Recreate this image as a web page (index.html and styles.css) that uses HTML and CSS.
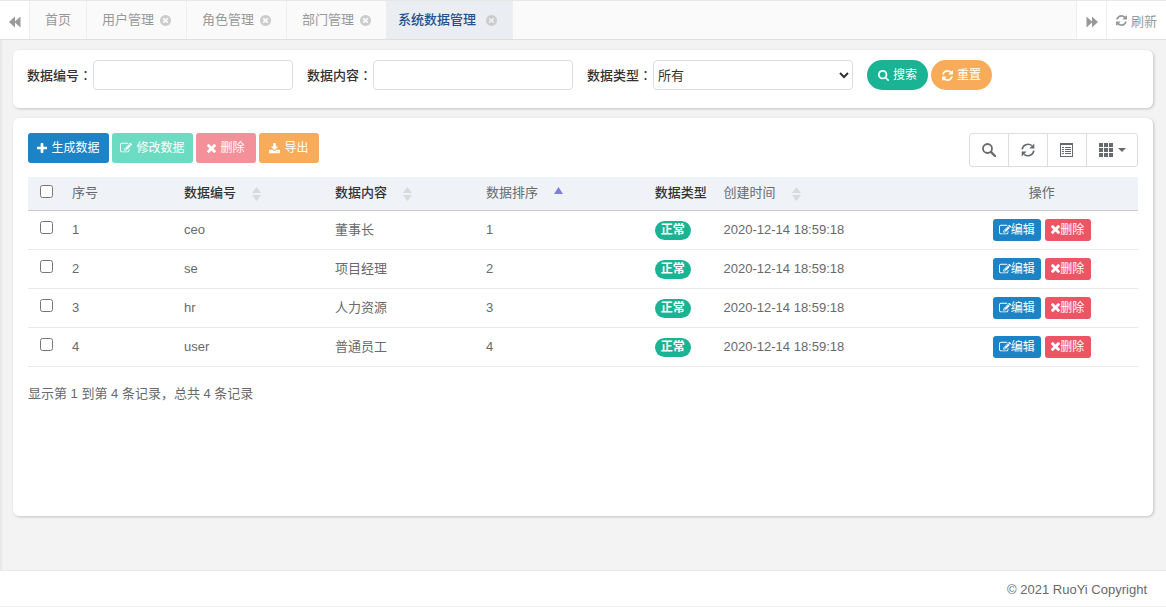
FILE: index.html
```html
<!DOCTYPE html>
<html lang="zh-CN">
<head>
<meta charset="utf-8">
<title>系统数据管理</title>
<link rel="stylesheet" href="styles.css">
</head>
<body>
<svg class="sprite" aria-hidden="true">
  <symbol id="close" viewBox="128 128 1536 1536"><path d="M1277 1122q0-26-19-45l-181-181 181-181q19-19 19-45 0-27-19-46l-90-90q-19-19-46-19-26 0-45 19l-181 181-181-181q-19-19-45-19-27 0-46 19l-90 90q-19 19-19 46 0 26 19 45l181 181-181 181q-19 19-19 45 0 27 19 46l90 90q19 19 46 19 26 0 45-19l181-181 181 181q19 19 45 19 27 0 46-19l90-90q19-19 19-46zm387-226q0 209-103 385.5t-279.5 279.5-385.5 103-385.5-103-279.5-279.5-103-385.5 103-385.5 279.5-279.5 385.5-103 385.5 103 279.5 279.5 103 385.5z"/></symbol>
  <symbol id="refresh" viewBox="128 128 1536 1536"><path d="M1639 1056q0 5-1 7-64 268-268 434.5t-478 166.5q-146 0-282.5-55t-243.5-157l-129 129q-19 19-45 19t-45-19-19-45v-448q0-26 19-45t45-19h448q26 0 45 19t19 45-19 45l-137 137q71 66 161 102t187 36q134 0 250-65t186-179q11-17 53-117 8-23 30-23h192q13 0 22.5 9.5t9.5 22.5zm25-800v448q0 26-19 45t-45 19h-448q-26 0-45-19t-19-45 19-45l138-138q-148-137-349-137-134 0-250 65t-186 179q-11 17-53 117-8 23-30 23h-199q-13 0-22.5-9.5t-9.5-22.5v-7q65-268 270-434.5t480-166.5q146 0 284 55.5t245 156.5l130-129q19-19 45-19t45 19 19 45z"/></symbol>
  <symbol id="search" viewBox="64 128 1664 1664"><path d="M1216 832q0-185-131.5-316.5t-316.5-131.5-316.5 131.5-131.5 316.5 131.5 316.5 316.5 131.5 316.5-131.5 131.5-316.5zm512 832q0 52-38 90t-90 38q-54 0-90-38l-343-342q-179 124-399 124-143 0-273.5-55.5t-225-150-150-225-55.5-273.5 55.5-273.5 150-225 225-150 273.5-55.5 273.5 55.5 225 150 150 225 55.5 273.5q0 220-124 399l343 343q37 37 37 90z"/></symbol>
  <symbol id="edit" viewBox="0 0 1792 1792"><path d="M888 1184l116-116-152-152-116 116v56h96v96h56zm440-720q-16-16-33 1l-350 350q-17 17-1 33t33-1l350-350q17-17 1-33zm80 594v190q0 119-84.5 203.5t-203.5 84.5h-832q-119 0-203.5-84.5t-84.5-203.5v-832q0-119 84.5-203.5t203.5-84.5h832q63 0 117 25 15 7 18 23 3 17-9 29l-49 49q-14 14-32 8-23-6-45-6h-832q-66 0-113 47t-47 113v832q0 66 47 113t113 47h832q66 0 113-47t47-113v-126q0-13 9-22l64-64q15-15 35-7t20 29zm-96-738l288 288-672 672h-288v-288zm444 132l-92 92-288-288 92-92q28-28 68-28t68 28l152 152q28 28 28 68t-28 68z"/></symbol>
  <symbol id="times" viewBox="302 366 1188 1188"><path d="M1490 1322q0 40-28 68l-136 136q-28 28-68 28t-68-28l-294-294-294 294q-28 28-68 28t-68-28l-136-136q-28-28-28-68t28-68l294-294-294-294q-28-28-28-68t28-68l136-136q28-28 68-28t68 28l294 294 294-294q28-28 68-28t68 28l136 136q28 28 28 68t-28 68l-294 294 294 294q28 28 28 68z"/></symbol>
  <symbol id="plus" viewBox="192 128 1408 1408"><path d="M1600 736v192q0 40-28 68t-68 28h-416v416q0 40-28 68t-68 28h-192q-40 0-68-28t-28-68v-416h-416q-40 0-68-28t-28-68v-192q0-40 28-68t68-28h416v-416q0-40 28-68t68-28h192q40 0 68 28t28 68v416h416q40 0 68 28t28 68z"/></symbol>
  <symbol id="download" viewBox="64 0 1664 1664"><path d="M1344 1344q0-26-19-45t-45-19-45 19-19 45 19 45 45 19 45-19 19-45zm256 0q0-26-19-45t-45-19-45 19-19 45 19 45 45 19 45-19 19-45zm128-224v320q0 40-28 68t-68 28h-1472q-40 0-68-28t-28-68v-320q0-40 28-68t68-28h465l135 136q58 56 136 56t136-56l136-136h464q40 0 68 28t28 68zm-325-569q17 41-14 70l-448 448q-18 19-45 19t-45-19l-448-448q-31-29-14-70 17-39 59-39h256v-448q0-26 19-45t45-19h256q26 0 45 19t19 45v448h256q42 0 59 39z"/></symbol>
  <symbol id="rewind" viewBox="0 0 12 12"><path d="M6 .5v5L11.500 .5v11L6 6.500v5L0 6z"/></symbol>
  <symbol id="forward" viewBox="0 0 12 12"><path d="M6 .5v5L.5 .5v11L6 6.500v5L12 6z"/></symbol>
  <symbol id="glass" viewBox="0 0 14 14"><circle cx="5.500" cy="5.500" r="4.500" fill="none" stroke="currentColor" stroke-width="1.800"/><path d="M9 9l4 4" fill="none" stroke="currentColor" stroke-width="2.400" stroke-linecap="round"/></symbol>
  <symbol id="cycle" viewBox="0 0 14 14"><path d="M1.200 6.300A5.800 5.500 0 0 1 10.800 2.700M12.800 7.700A5.800 5.500 0 0 1 3.200 11.300" fill="none" stroke="currentColor" stroke-width="1.600"/><path d="M13.300 .5v5H8.300zM.7 13.500v-5h5z"/></symbol>
  <symbol id="list" viewBox="0 0 14 14"><path fill-rule="evenodd" d="M0 0h13v14H0zM1 2v11h11V2z"/><path d="M2 4h2v1H2zM5 4h6v1H5zM2 6h2v1H2zM5 6h6v1H5zM2 8h2v1H2zM5 8h6v1H5zM2 10h2v1H2zM5 10h6v1H5z"/></symbol>
  <symbol id="grid" viewBox="0 0 14 14"><path d="M0 0h4v4H0zM5 0h4v4H5zM10 0h4v4h-4zM0 5h4v4H0zM5 5h4v4H5zM10 5h4v4h-4zM0 10h4v4H0zM5 10h4v4H5zM10 10h4v4h-4z"/></symbol>
  <symbol id="sort" viewBox="0 0 9 14"><path d="M4.500 0L9 6H0zM0 8h9l-4.500 6z"/></symbol>
  <symbol id="sort-asc" viewBox="0 0 9 14"><path d="M4.500 0L9 7H0z"/></symbol>
</svg>

<nav class="tabs">
  <button class="tab-arrow" type="button" aria-label="向左"><svg class="i12"><use href="#rewind"/></svg></button>
  <div class="tab-list">
    <a class="tab" href="#">首页</a>
    <a class="tab" href="#">用户管理<svg class="i11"><use href="#close"/></svg></a>
    <a class="tab" href="#">角色管理<svg class="i11"><use href="#close"/></svg></a>
    <a class="tab" href="#">部门管理<svg class="i11"><use href="#close"/></svg></a>
    <a class="tab active" href="#">系统数据管理<svg class="i11"><use href="#close"/></svg></a>
  </div>
  <button class="tab-arrow right" type="button" aria-label="向右"><svg class="i12"><use href="#forward"/></svg></button>
  <button class="tab-refresh" type="button"><svg class="i11"><use href="#refresh"/></svg>刷新</button>
</nav>

<main class="content">
  <form class="panel search-form">
    <div class="field"><label for="code">数据编号<span class="colon" lang="zh-TW">：</span></label><input id="code" type="text"></div>
    <div class="field"><label for="text">数据内容<span class="colon" lang="zh-TW">：</span></label><input id="text" type="text"></div>
    <div class="field"><label for="kind">数据类型<span class="colon" lang="zh-TW">：</span></label><select id="kind"><option>所有</option></select></div>
    <div class="form-actions">
      <button class="btn pill green" type="button"><svg class="i11"><use href="#search"/></svg>搜索</button>
      <button class="btn pill orange" type="button"><svg class="i11"><use href="#refresh"/></svg>重置</button>
    </div>
  </form>

  <section class="panel data-panel">
    <div class="toolbar">
      <div class="actions">
        <button class="btn wide blue" type="button"><svg class="i10"><use href="#plus"/></svg>生成数据</button>
        <button class="btn wide green" type="button" disabled><svg class="i12"><use href="#edit"/></svg>修改数据</button>
        <button class="btn red" type="button" disabled><svg class="i9"><use href="#times"/></svg>删除</button>
        <button class="btn orange" type="button"><svg class="i11"><use href="#download"/></svg>导出</button>
      </div>
      <div class="tools">
        <button type="button" aria-label="搜索"><svg class="i14"><use href="#glass"/></svg></button>
        <button type="button" aria-label="刷新"><svg class="i14"><use href="#cycle"/></svg></button>
        <button type="button" aria-label="切换视图"><svg class="i14"><use href="#list"/></svg></button>
        <button type="button" aria-label="列" class="drop"><svg class="i14"><use href="#grid"/></svg><span class="caret"></span></button>
      </div>
    </div>

    <table>
      <colgroup><col class="c-check"><col class="c-no"><col class="c-mid"><col class="c-mid"><col class="c-sort"><col class="c-kind"><col class="c-time"><col></colgroup>
      <thead>
        <tr>
          <th class="check"><input type="checkbox" aria-label="全选"></th>
          <th>序号</th>
          <th class="strong">数据编号<svg class="sort"><use href="#sort"/></svg></th>
          <th class="strong">数据内容<svg class="sort"><use href="#sort"/></svg></th>
          <th>数据排序<svg class="sort asc"><use href="#sort-asc"/></svg></th>
          <th class="strong">数据类型</th>
          <th>创建时间<svg class="sort"><use href="#sort"/></svg></th>
          <th class="ops">操作</th>
        </tr>
      </thead>
      <tbody>
        <tr>
          <td class="check"><input type="checkbox" aria-label="选择 1"></td><td>1</td><td>ceo</td><td>董事长</td><td>1</td><td><span class="badge">正常</span></td><td>2020-12-14 18:59:18</td>
          <td class="ops"><div class="row-actions"><button class="btn mini blue" type="button"><svg class="i12"><use href="#edit"/></svg>编辑</button><button class="btn mini red" type="button"><svg class="i9"><use href="#times"/></svg>删除</button></div></td>
        </tr>
        <tr>
          <td class="check"><input type="checkbox" aria-label="选择 2"></td><td>2</td><td>se</td><td>项目经理</td><td>2</td><td><span class="badge">正常</span></td><td>2020-12-14 18:59:18</td>
          <td class="ops"><div class="row-actions"><button class="btn mini blue" type="button"><svg class="i12"><use href="#edit"/></svg>编辑</button><button class="btn mini red" type="button"><svg class="i9"><use href="#times"/></svg>删除</button></div></td>
        </tr>
        <tr>
          <td class="check"><input type="checkbox" aria-label="选择 3"></td><td>3</td><td>hr</td><td>人力资源</td><td>3</td><td><span class="badge">正常</span></td><td>2020-12-14 18:59:18</td>
          <td class="ops"><div class="row-actions"><button class="btn mini blue" type="button"><svg class="i12"><use href="#edit"/></svg>编辑</button><button class="btn mini red" type="button"><svg class="i9"><use href="#times"/></svg>删除</button></div></td>
        </tr>
        <tr>
          <td class="check"><input type="checkbox" aria-label="选择 4"></td><td>4</td><td>user</td><td>普通员工</td><td>4</td><td><span class="badge">正常</span></td><td>2020-12-14 18:59:18</td>
          <td class="ops"><div class="row-actions"><button class="btn mini blue" type="button"><svg class="i12"><use href="#edit"/></svg>编辑</button><button class="btn mini red" type="button"><svg class="i9"><use href="#times"/></svg>删除</button></div></td>
        </tr>
      </tbody>
    </table>
    <p class="summary">显示第 1 到第 4 条记录，总共 4 条记录</p>
  </section>
</main>

<footer class="footer">© 2021 RuoYi Copyright</footer>
</body>
</html>
```

FILE: styles.css
```css
* { box-sizing: border-box; }

body {
  margin: 0;
  min-height: 100vh;
  display: flex;
  flex-direction: column;
  background: #f3f3f4;
  box-shadow: inset 2px 0 2px rgba(0, 0, 0, .05);
  color: #676a6c;
  font: 13px/20px "Liberation Sans", "Noto Sans CJK SC", sans-serif;
}

button, input, select { font-family: inherit; }
button { cursor: pointer; }
svg { fill: currentColor; flex: none; }
.sprite { display: none; }
.i9 { width: 9px; height: 9px; }
.i10 { width: 10px; height: 10px; }
.i11 { width: 11px; height: 11px; }
.i12 { width: 12px; height: 12px; }
.i14 { width: 14px; height: 14px; }

/* Tab bar */
.tabs {
  display: flex;
  height: 40px;
  background: #fafafa;
  border-top: 1px solid #e7e7e7;
  border-bottom: 1px solid #e0e0e0;
  color: #999;
}
.tab-list { display: flex; flex: 1; }
.tab {
  display: flex;
  align-items: center;
  gap: 6px;
  padding: 0 15px;
  border-right: 1px solid #eee;
  color: #999;
  text-decoration: none;
}
.tab svg { color: #ccc; }
.tab.active {
  gap: 10px;
  padding-left: 11px;
  background: #eaedf1;
  color: #23508e;
  font-weight: 500;
}
.tab-arrow, .tab-refresh {
  display: flex;
  align-items: center;
  justify-content: center;
  gap: 4px;
  width: 30px;
  padding: 0;
  border: 0;
  border-right: 1px solid #eee;
  background: #fff;
  color: #999;
  font-size: 13px;
}
.tab-arrow svg { margin-top: 3px; }
.tab-arrow.right { border-left: 1px solid #eee; width: 31px; }
.tab-refresh { width: 59px; border: 0; }

/* Panels */
.content {
  flex: 1;
  display: flex;
  flex-direction: column;
  gap: 10px;
  padding: 10px 13px 54px;
}
.panel {
  background: #fff;
  border-radius: 6px;
  box-shadow: 1px 1px 3px rgba(0, 0, 0, .2);
}
.search-form {
  display: flex;
  gap: 14px;
  padding: 10px 14px 18px;
}
.field { display: flex; align-items: center; }
.field label { width: 66px; color: #333; font-weight: 500; }
.colon { font-family: "Noto Sans CJK TC", sans-serif; font-weight: 400; }
.field input, .field select {
  width: 200px;
  height: 30px;
  padding: 0 4px;
  border: 1px solid #ddd;
  border-radius: 4px;
  background: #fff;
  font-size: 13px;
}
.field select { padding: 0; color: #333; }
.form-actions { display: flex; gap: 3px; }

/* Buttons */
.btn {
  display: flex;
  align-items: center;
  justify-content: center;
  gap: 4px;
  width: 60px;
  height: 30px;
  padding: 0;
  border: 0;
  border-radius: 3px;
  color: #fff;
  font-size: 12px;
  line-height: 18px;
  white-space: nowrap;
}
.btn:disabled { opacity: .65; }
.wide { width: 81px; }
.pill { width: 61px; border-radius: 15px; }
.mini { gap: 0; width: 48px; height: 22px; }
.mini.red { width: 46px; }
.blue { background: #1c84c6; }
.green { background: #1ab394; }
.wide.green { background: #1dc9a1; }
.orange { background: #f8ac59; }
.red { background: #ed5565; }

/* Data table */
.data-panel { flex: 1; padding: 15px; }
.toolbar { display: flex; justify-content: space-between; margin-bottom: 10px; }
.actions { display: flex; gap: 3px; }
.tools {
  display: flex;
  height: 34px;
  border: 1px solid #ddd;
  border-radius: 3px;
}
.tools button {
  display: flex;
  align-items: center;
  justify-content: center;
  width: 39px;
  padding: 0;
  border: 0;
  border-right: 1px solid #ddd;
  background: none;
  color: #676a6c;
}
.tools .drop { gap: 5px; width: 50px; border: 0; }
.caret {
  border-top: 4px solid;
  border-left: 4px solid transparent;
  border-right: 4px solid transparent;
}

table { width: 100%; table-layout: fixed; border-collapse: collapse; }
.c-check { width: 36px; }
.c-no { width: 10.1%; }
.c-mid { width: 13.6%; }
.c-sort { width: 15.2%; }
.c-kind { width: 6.2%; }
.c-time { width: 20.7%; }
th, td { padding: 0 8px; text-align: left; white-space: nowrap; }
th {
  height: 33px;
  background: #eff3f8;
  border-bottom: 1px solid #ccc;
  font-weight: 400;
}
th.strong { padding-right: 0; color: #333; font-weight: 500; }
td { height: 39px; border-bottom: 1px solid #e7eaec; }
.check { padding: 0; text-align: center; }
.check input { display: block; margin: 0 auto 4px; }
.ops { text-align: center; }
.sort { width: 9px; height: 14px; margin-left: 16px; vertical-align: middle; color: #d9dadc; }
.sort.asc { color: #7b7fe0; }
.badge {
  display: inline-block;
  padding: 0 6px;
  border-radius: 10px;
  background: #1ab394;
  color: #fff;
  font-size: 12px;
  font-weight: 700;
  line-height: 19px;
}
.row-actions { display: flex; justify-content: center; gap: 4px; }
.summary { margin: 17px 0 0; }

/* Footer */
.footer {
  padding: 9px 19px 6px;
  border-top: 1px solid #e7eaec;
  border-bottom: 1px solid #eee;
  background: #fff;
  text-align: right;
}
```
